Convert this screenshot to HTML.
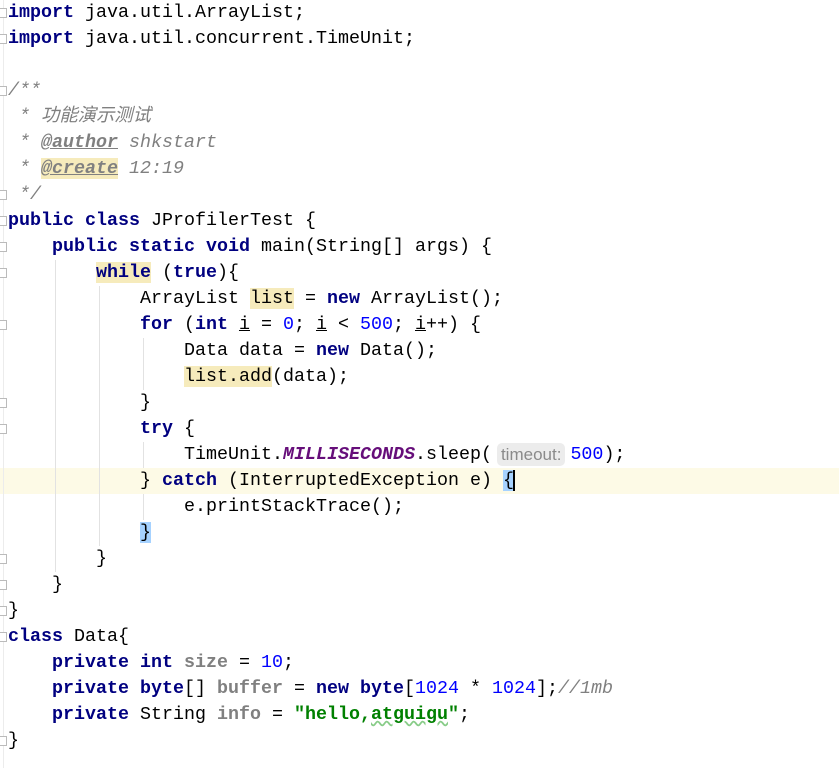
<!DOCTYPE html>
<html><head><meta charset="utf-8"><style>
body{margin:0;width:839px;height:768px;background:#fff;overflow:hidden;position:relative;font-family:"Liberation Mono","Noto Sans CJK SC",monospace;font-size:18.33px;color:#000}
.l{position:absolute;left:8px;top:0;height:26px;line-height:26px;white-space:pre}
.k{color:#000080;font-weight:bold}
.n{color:#0000ff}
.s{color:#008000;font-weight:bold}
.c{color:#808080;font-style:italic}
.ct{color:#808080;font-style:italic;font-weight:bold;text-decoration:underline}
.sf{color:#660e7a;font-weight:bold;font-style:italic}
.f{color:#808080;font-weight:bold}
.h{background:#f6ebbc}
.b{background:#a6d2ff}
.g{position:absolute;width:1px;background:#e2e2e2}
.hint{display:inline-block;height:23px;line-height:23px;vertical-align:top;margin-top:1px;margin-left:5px;margin-right:5px;background:#ececec;color:#8a8a8a;font-family:"Liberation Sans",sans-serif;font-size:17px;border-radius:5px;padding:0 4px}
.fm{position:absolute;left:0;width:6px;height:8px;border:1px solid #bbb;border-left:none;background:#fff}
</style></head><body>
<div style="position:absolute;left:0;top:468px;width:839px;height:26px;background:#fdfae6"></div>
<div class="g" style="left:3px;top:0;height:768px;background:#ececec"></div>
<div class="g" style="left:55px;top:260px;height:312px"></div>
<div class="g" style="left:99px;top:286px;height:260px"></div>
<div class="g" style="left:143px;top:338px;height:52px"></div>
<div class="g" style="left:143px;top:442px;height:26px"></div>
<div class="g" style="left:143px;top:494px;height:26px"></div>
<div class="fm" style="top:8px"></div><div class="fm" style="top:34px"></div>
<div class="fm" style="top:86px"></div><div class="fm" style="top:190px"></div>
<div class="fm" style="top:216px"></div><div class="fm" style="top:242px"></div>
<div class="fm" style="top:268px"></div><div class="fm" style="top:320px"></div>
<div class="fm" style="top:398px"></div><div class="fm" style="top:424px"></div>
<div class="fm" style="top:554px"></div><div class="fm" style="top:580px"></div>
<div class="fm" style="top:606px"></div><div class="fm" style="top:632px"></div>
<div class="fm" style="top:736px"></div>
<div class="l" style="top:0"><span class="k">import</span> java.util.ArrayList;</div>
<div class="l" style="top:26px"><span class="k">import</span> java.util.concurrent.TimeUnit;</div>
<div class="l c" style="top:78px">/**</div>
<div class="l c" style="top:104px"> * 功能演示测试</div>
<div class="l c" style="top:130px"> * <span class="ct">@author</span> shkstart</div>
<div class="l c" style="top:156px"> * <span class="ct h">@create</span> 12:19</div>
<div class="l c" style="top:182px"> */</div>
<div class="l" style="top:208px"><span class="k">public class</span> JProfilerTest {</div>
<div class="l" style="top:234px">    <span class="k">public static void</span> main(String[] args) {</div>
<div class="l" style="top:260px">        <span class="k h">while</span> (<span class="k">true</span>){</div>
<div class="l" style="top:286px">            ArrayList <span class="h">list</span> = <span class="k">new</span> ArrayList();</div>
<div class="l" style="top:312px">            <span class="k">for</span> (<span class="k">int</span> <u>i</u> = <span class="n">0</span>; <u>i</u> &lt; <span class="n">500</span>; <u>i</u>++) {</div>
<div class="l" style="top:338px">                Data data = <span class="k">new</span> Data();</div>
<div class="l" style="top:364px">                <span class="h">list.add</span>(data);</div>
<div class="l" style="top:390px">            }</div>
<div class="l" style="top:416px">            <span class="k">try</span> {</div>
<div class="l" style="top:442px">                TimeUnit.<span class="sf">MILLISECONDS</span>.sleep(<span class="hint">timeout:</span><span class="n">500</span>);</div>
<div class="l" style="top:468px">            } <span class="k">catch</span> (InterruptedException e) <span class="b">{</span><span style="border-left:2px solid #000;margin-left:-1px"></span></div>
<div class="l" style="top:494px">                e.printStackTrace();</div>
<div class="l" style="top:520px">            <span class="b">}</span></div>
<div class="l" style="top:546px">        }</div>
<div class="l" style="top:572px">    }</div>
<div class="l" style="top:598px">}</div>
<div class="l" style="top:624px"><span class="k">class</span> Data{</div>
<div class="l" style="top:650px">    <span class="k">private int</span> <span class="f">size</span> = <span class="n">10</span>;</div>
<div class="l" style="top:676px">    <span class="k">private byte</span>[] <span class="f">buffer</span> = <span class="k">new byte</span>[<span class="n">1024</span> * <span class="n">1024</span>];<span class="c">//1mb</span></div>
<div class="l" style="top:702px">    <span class="k">private</span> String <span class="f">info</span> = <span class="s">"hello,<span style="text-decoration:underline wavy #8c8;">atguigu</span>"</span>;</div>
<div class="l" style="top:728px">}</div>
</body></html>
